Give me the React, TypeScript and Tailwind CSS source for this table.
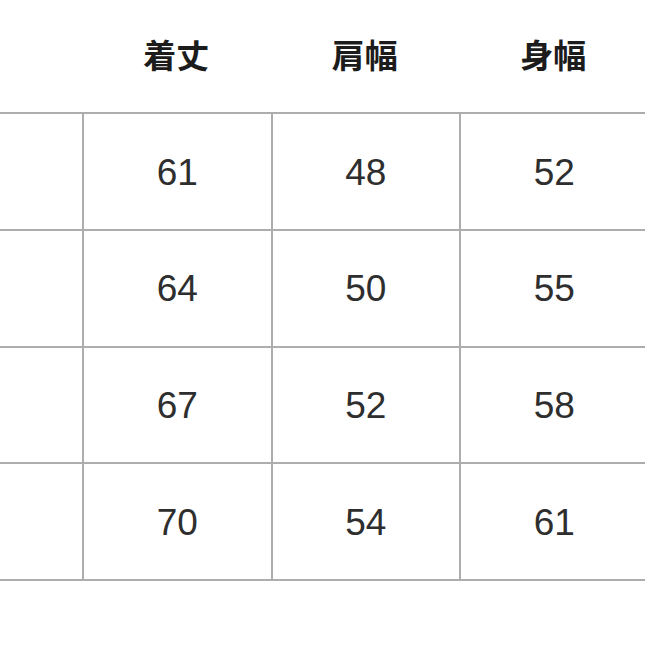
import React from "react";

const headers = ["", "着丈", "肩幅", "身幅"];
const rows = [
  ["", "61", "48", "52"],
  ["", "64", "50", "55"],
  ["", "67", "52", "58"],
  ["", "70", "54", "61"],
];

export default function App() {
  return (
    <div className="w-[645px] h-[645px] overflow-hidden bg-white">
      <div className="ml-[-106.5px] w-[760px] flex flex-col">
        <div className="flex h-[112px]">
          {headers.map((h, i) => (
            <div
              key={i}
              className="w-[188.5px] shrink-0 flex items-center justify-center pb-[2px] text-[33px] font-bold text-[#1c1c1c]"
              style={{ fontFamily: '"Noto Sans CJK JP", "Noto Sans", sans-serif' }}
            >
              {h}
            </div>
          ))}
        </div>
        {rows.map((r, ri) => (
          <div key={ri} className="flex h-[116.75px] border-t-2 border-[#adadad]">
            {r.map((c, ci) => (
              <div
                key={ci}
                className={
                  "w-[188.5px] shrink-0 flex items-center justify-center pt-[2px] text-[37px] text-[#2e2e2e] " +
                  (ci > 0 ? "border-l-2 border-[#adadad]" : "")
                }
                style={{ fontFamily: '"Liberation Sans", Arial, sans-serif' }}
              >
                {c}
              </div>
            ))}
          </div>
        ))}
        <div className="border-t-2 border-[#adadad]" />
      </div>
    </div>
  );
}
